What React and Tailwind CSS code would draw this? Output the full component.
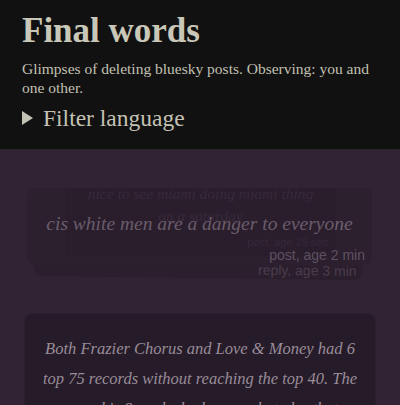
import React from 'react';

const SERIF = { fontFamily: '"Liberation Serif", "Times New Roman", serif' };
const SANS = { fontFamily: '"Liberation Sans", Arial, sans-serif' };

function Triangle() {
  return (
    <svg width="11" height="14" viewBox="0 0 11 14" className="shrink-0">
      <path d="M0 0 L11 7 L0 14 Z" fill="#c4c2b4" />
    </svg>
  );
}

export default function App() {
  return (
    <div className="min-h-screen w-full bg-[#312333]" style={SERIF}>
      {/* Header */}
      <header className="bg-[#111111] border-b border-[#262626] px-[22px] pt-[11px] pb-[17px]">
        <h1 className="text-[35px] leading-[40px] font-bold text-[#c9c7b8]">
          Final words
        </h1>
        <p className="mt-[8px] text-[15.5px] leading-[19px] text-[#c2c0b2]">
          Glimpses of deleting bluesky posts. Observing: you and one other.
        </p>
        <div className="mt-[7px] flex items-center gap-[10px] text-[23.5px] leading-[28px] text-[#c4c2b4]">
          <Triangle />
          <span>Filter language</span>
        </div>
      </header>

      <main className="px-6">
        {/* Stack of fading posts */}
        <div className="relative mt-[38px] h-[90px]">
          {/* reply card, behind */}
          <div className="absolute left-[10px] right-[13px] top-[12px] bottom-0 rotate-[0.7deg] rounded-lg bg-[#2b1f2d]">
            <span
              className="absolute bottom-[1px] right-[6px] text-[14px] leading-[16px] text-[#4a3d4c]"
              style={SANS}
            >
              reply, age 3 min
            </span>
          </div>

          {/* post card */}
          <div className="absolute left-[3px] right-[4px] top-0 h-[77px] rounded-lg bg-[#2c1f2e] pt-[24px]">
            <p className="text-center italic text-[19.5px] leading-[24px] text-[#6c5f6e]">
              cis white men are a danger to everyone
            </p>
            <p
              className="mt-[11px] pr-[7px] text-right text-[14px] leading-[16px] text-[#5f5262]"
              style={SANS}
            >
              post, age 2 min
            </p>
          </div>

          {/* ghost card, almost gone */}
          <div className="absolute left-[41px] right-[40px] top-0 h-[68px] bg-black/[0.03]">
            <div className="relative -top-[5px] text-center italic text-[15.5px] leading-[22px] text-[#372a3a]">
              <p>nice to see miami doing miami thing</p>
              <p>on a saturday</p>
            </div>
            <p
              className="absolute right-[8px] top-[48px] text-[11px] leading-[12px] text-[#352838]"
              style={SANS}
            >
              post, age 25 sec
            </p>
          </div>
        </div>

        {/* Current post */}
        <div className="mt-[35px] rounded-lg border border-white/[0.02] bg-[#261b28] px-4 py-5">
          <p className="text-center italic text-[16.5px] leading-[30px] text-[#998c98]">
            Both Frazier Chorus and Love &amp; Money had 6 top 75 records without reaching the top 40. The record is 8, and who knows what else that means for the charts.
          </p>
        </div>
      </main>
    </div>
  );
}
